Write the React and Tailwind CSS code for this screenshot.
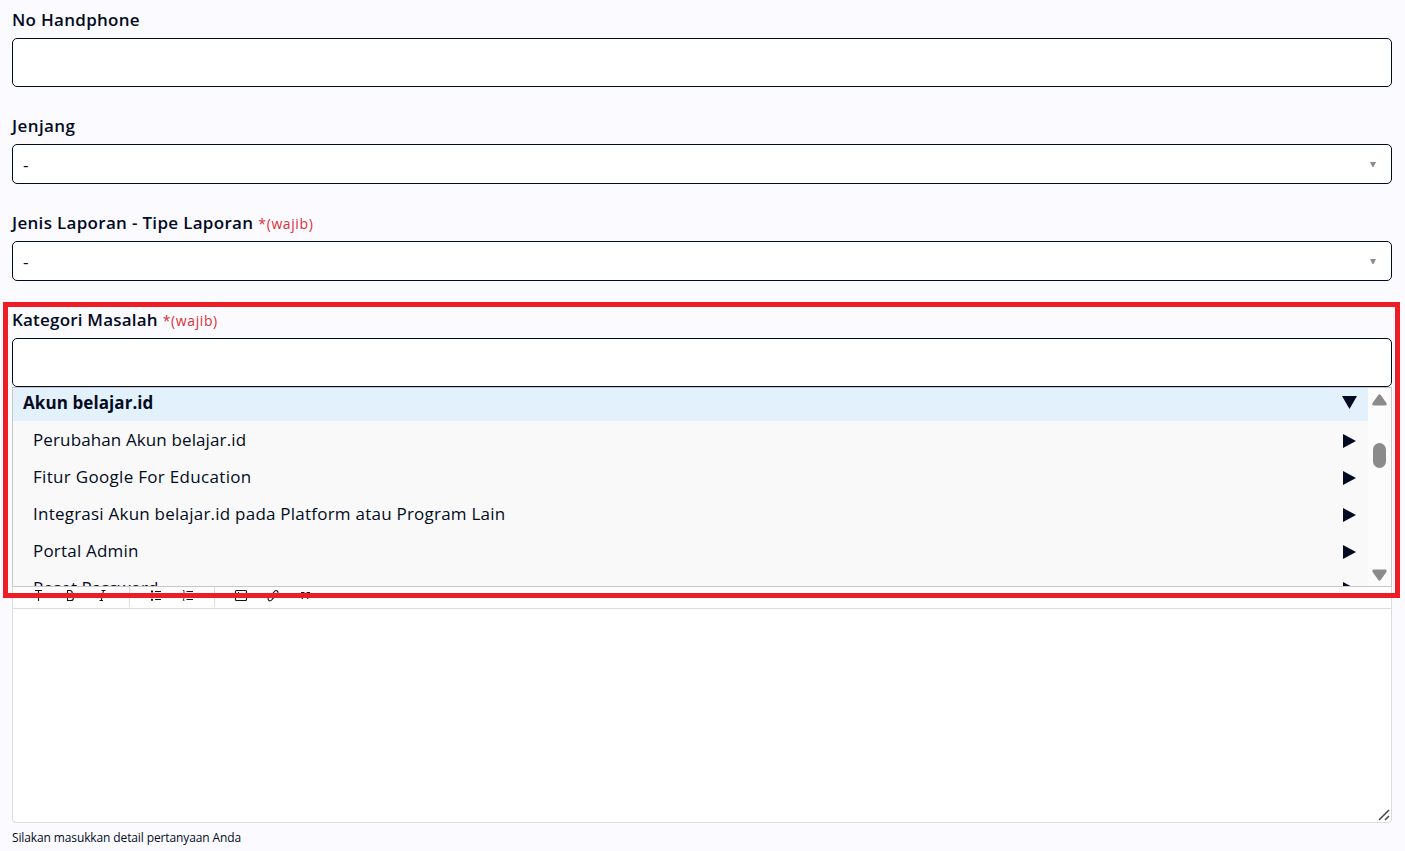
import React from "react";

function Label({ children, required, tracking }) {
  return (
    <div className="flex h-7 items-start pt-px whitespace-nowrap">
      <span className={"text-[17px] leading-[18px] font-semibold " + tracking}>{children}</span>
      {required && (
        <span className="ml-[5px] text-[14px] leading-[20px] tracking-[0.6px] text-[#dc3036]">*(wajib)</span>
      )}
    </div>
  );
}

function Select() {
  return (
    <div className="flex h-10 items-center justify-between rounded-[5px] border border-[#020b22] bg-white pr-[15px] pl-[10px]">
      <span className="pt-[2px] text-[17px] leading-5">-</span>
      <svg className="h-[5px] w-[6px]" viewBox="0 0 6 5" fill="#8c8c8c">
        <path d="M0 0h6L3.5 5h-1z" />
      </svg>
    </div>
  );
}

const items = [
  { text: "Perubahan Akun belajar.id", tracking: "tracking-[0.12px]" },
  { text: "Fitur Google For Education", tracking: "tracking-[0.31px]" },
  { text: "Integrasi Akun belajar.id pada Platform atau Program Lain", tracking: "tracking-[0.23px]" },
  { text: "Portal Admin", tracking: "tracking-[0.2px]" },
  { text: "Reset Password", tracking: "tracking-[0.05px]" },
];

function Dropdown() {
  return (
    <div className="absolute top-full left-0 z-10 flex h-[200px] w-full overflow-hidden border border-[#c8c8c8] bg-[#f9f9f9]">
      <div className="-mt-1 min-w-0 flex-1">
        <div className="flex h-[37px] items-center justify-between bg-[#e3f1fd] pr-[11px] pl-[10px]">
          <span className="text-[17px] leading-6 font-bold tracking-[0.08px] text-[#020b22]">Akun belajar.id</span>
          <svg className="h-[13px] w-[15px]" viewBox="0 0 15 13" fill="#020b22">
            <path d="M0 0h15L7.5 13z" />
          </svg>
        </div>
        {items.map((item) => (
          <div key={item.text} className="flex h-[37px] items-center justify-between pr-3 pl-5">
            <span className={"text-[17px] leading-6 whitespace-nowrap " + item.tracking}>{item.text}</span>
            <svg className="mt-[3px] h-[14px] w-[13px]" viewBox="0 0 13 14" fill="#020b22">
              <path d="M0 0v14L13 7z" />
            </svg>
          </div>
        ))}
      </div>
      <div className="flex w-[23px] flex-col items-center bg-[#fcfcfc] pt-[6px] pb-[5px]">
        <svg className="h-[12px] w-[15px]" viewBox="0 0 15 12" fill="#8b8b8b">
          <path d="M6.3 1Q7.5-.5 8.7 1L14.4 9Q15.3 11.5 13 11.5H2Q-.3 11.5.6 9z" />
        </svg>
        <div className="mt-[37px] h-[25px] w-[13px] rounded-full bg-[#8b8b8b]" />
        <svg className="mt-auto h-[12px] w-[15px]" viewBox="0 0 15 12" fill="#8b8b8b">
          <path d="M6.3 11Q7.5 12.5 8.7 11L14.4 3Q15.3 .5 13 .5H2Q-.3 .5.6 3z" />
        </svg>
      </div>
    </div>
  );
}

function ToolIcon({ children }) {
  return (
    <svg className="h-4 w-8" viewBox="0 0 32 16" fill="none" stroke="#111" strokeWidth="1.1">
      {children}
    </svg>
  );
}

function Toolbar() {
  return (
    <div className="flex h-[28px] border-b border-[#dcdcdc] pl-[9px]">
      <div className="mb-px flex items-center border-r border-[#dcdcdc] pt-[3px] pr-[11px]">
        <ToolIcon><path d="M13 2.500h7M16.500 2v11" /></ToolIcon>
        <ToolIcon><path d="M13.500 2v11M13 2.500h3a2.500 2.500 0 012.200 2.500a2.500 2.500 0 01-1.200 2.500h-3.500M17 7.500a2.500 2.500 0 01-.300 5H13" /></ToolIcon>
        <ToolIcon><path d="M15.500 2.500h4M13.500 12.500h3.500M17.500 2.500l-2.200 10" /></ToolIcon>
      </div>
      <div className="mb-px flex items-center border-r border-[#dcdcdc] pt-[3px] pr-[11px] pl-[9px]">
        <ToolIcon>
          <path d="M16 3.500h6M16 7.500h6M16 11.500h6" />
          <path d="M12 3.500h2M12 7.500h2M12 11.800h2" strokeWidth="2" />
        </ToolIcon>
        <ToolIcon>
          <path d="M15.500 3.500H22M15.500 7.500H22M15.500 11.500H22" />
          <path d="M12 2.500h1v4M12 9h1.500L12 12.300h1.500" strokeWidth=".8" />
        </ToolIcon>
      </div>
      <div className="mb-px flex items-center pt-[3px] pl-[10px]">
        <ToolIcon>
          <rect x="10.500" y="2.500" width="11" height="10" rx="1" />
          <path d="M11 10l3-3 3 3 2-2 2 2M13 4.500h1" strokeWidth="1" />
        </ToolIcon>
        <ToolIcon>
          <path d="M15.500 9c-1-1-.8-2 0-2.900l2-2.800c2-2 4.500.3 3.200 2.500l-1.900 2.400M16.500 7c1.300 1 .8 2.200 0 3l-2 2.200c-2 1.700-4.500-.5-3-2.500l1.700-1.700" />
        </ToolIcon>
        <ToolIcon>
          <path d="M12 4h3.500v3.500L13.500 11h-1l1-3H12zM17.500 4H21v3.500L19 11h-1l1-3h-1.500z" fill="#111" stroke="none" />
        </ToolIcon>
      </div>
    </div>
  );
}

export default function App() {
  return (
    <main className="relative h-[851px] w-full overflow-hidden bg-[#fbfaff] pt-[10px] pr-[13px] pl-3 font-['Open_Sans','Noto_Sans',sans-serif] text-[#020b22]">
      <Label tracking="tracking-[0.29px]">No Handphone</Label>
      <div className="h-[49px] rounded-[5px] border border-[#020b22] bg-white" />
      <div className="mt-[29px]">
        <Label tracking="tracking-[0.4px]">Jenjang</Label>
        <Select />
      </div>
      <div className="mt-[29px]">
        <Label tracking="tracking-[0.31px]" required>Jenis Laporan - Tipe Laporan</Label>
        <Select />
      </div>
      <div className="relative mt-[29px]">
        <Label tracking="tracking-[0.2px]" required>Kategori Masalah</Label>
        <div className="h-[49px] rounded-[5px] border border-[#020b22] bg-white" />
        <Dropdown />
      </div>
      <div className="mt-[193px] flex h-[243px] flex-col rounded-[4px] border border-[#dcdcdc] bg-white">
        <Toolbar />
        <div className="flex flex-1 items-end justify-end pr-[1px] pb-[1px]">
          <svg className="h-[12px] w-[12px]" viewBox="0 0 12 12" fill="none" stroke="#444" strokeWidth="1.5">
            <path d="M1 11L11 1M7 11l4-4" />
          </svg>
        </div>
      </div>
      <p className="mt-[7px] text-[12px] leading-4 tracking-[-0.12px] whitespace-nowrap">Silakan masukkan detail pertanyaan Anda</p>
      <div className="pointer-events-none absolute top-[302px] left-[3px] z-20 h-[296px] w-[1397px] border-[5px] border-[#ee1c25]" />
    </main>
  );
}
